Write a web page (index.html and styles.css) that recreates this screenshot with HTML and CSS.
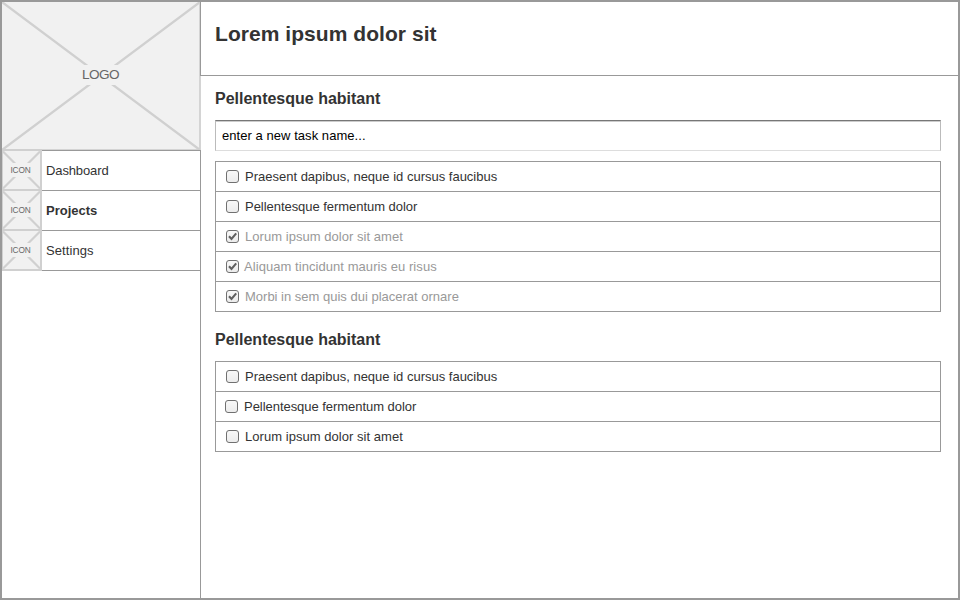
FILE: index.html
```
<!DOCTYPE html>
<html lang="en">
<head>
<meta charset="utf-8">
<title>Projects</title>
<link rel="stylesheet" href="styles.css">
</head>
<body>
<div class="app">
  <aside class="sidebar">
    <div class="logo">
      <svg class="cross" viewBox="0 0 199 149" preserveAspectRatio="none"><path d="M0 0L199 149M199 0L0 149"/></svg>
      <span class="logo-text">LOGO</span>
    </div>
    <nav class="nav">
      <a class="nav-item"><span class="icon"><svg class="cross" viewBox="0 0 39 39"><path d="M0 0L39 39M39 0L0 39"/></svg><span class="icon-text">ICON</span></span><span class="nav-label dashboard">Dashboard</span></a>
      <a class="nav-item active"><span class="icon"><svg class="cross" viewBox="0 0 39 39"><path d="M0 0L39 39M39 0L0 39"/></svg><span class="icon-text">ICON</span></span><span class="nav-label">Projects</span></a>
      <a class="nav-item"><span class="icon"><svg class="cross" viewBox="0 0 39 39"><path d="M0 0L39 39M39 0L0 39"/></svg><span class="icon-text">ICON</span></span><span class="nav-label settings">Settings</span></a>
    </nav>
  </aside>
  <main class="main">
    <header class="header"><h1>Lorem ipsum dolor sit</h1></header>
    <section class="content">
      <h2>Pellentesque habitant</h2>
      <div class="task-input">enter a new task name...</div>
      <ul class="tasks">
        <li><span class="box"></span><span>Praesent dapibus, neque id cursus faucibus</span></li>
        <li><span class="box"></span><span class="snug">Pellentesque fermentum dolor</span></li>
        <li class="done"><span class="box"><svg viewBox="0 0 13 13"><path d="M3 6.2L5.5 8.9L10.2 3.4"/></svg></span><span class="loose">Lorum ipsum dolor sit amet</span></li>
        <li class="done tight"><span class="box"><svg viewBox="0 0 13 13"><path d="M3 6.2L5.5 8.9L10.2 3.4"/></svg></span><span class="looser">Aliquam tincidunt mauris eu risus</span></li>
        <li class="done"><span class="box"><svg viewBox="0 0 13 13"><path d="M3 6.2L5.5 8.9L10.2 3.4"/></svg></span><span>Morbi in sem quis dui placerat ornare</span></li>
      </ul>
      <h2 class="second">Pellentesque habitant</h2>
      <ul class="tasks">
        <li><span class="box"></span><span>Praesent dapibus, neque id cursus faucibus</span></li>
        <li class="shifted"><span class="box"></span><span class="snug">Pellentesque fermentum dolor</span></li>
        <li><span class="box"></span><span class="loose">Lorum ipsum dolor sit amet</span></li>
      </ul>
    </section>
  </main>
</div>
</body>
</html>
```
FILE: styles.css
```
* { box-sizing: border-box; }
body {
  margin: 0;
  font: 13px/16px "Liberation Sans", Arial, sans-serif;
  color: #333;
  background: #fff;
}
.app {
  display: flex;
  width: 960px;
  height: 600px;
  border: 2px solid #999;
}
.sidebar {
  width: 199px;
  flex: none;
  border-right: 1px solid #999;
}
.logo {
  position: relative;
  display: flex;
  align-items: center;
  justify-content: center;
  width: 199px;
  height: 148px;
  background: #f1f1f1;
  border-right: 2px solid #d4d4d4;
  border-bottom: 1px solid #d4d4d4;
}
.cross {
  position: absolute;
  inset: 0;
  width: 100%;
  height: 100%;
  fill: none;
  stroke: #d0d0d0;
  stroke-width: 2.3;
}
.logo .cross { width: 198px; height: 148px; }
.logo-text {
  position: relative;
  bottom: 1px;
  padding: 2px 0;
  width: 42px;
  height: 20px;
  text-align: center;
  background: #f1f1f1;
  color: #666;
  font-size: 13.6px;
  letter-spacing: -.6px;
}
.nav { border-top: 1px solid #999; }
.nav-item {
  display: flex;
  align-items: center;
  height: 40px;
  border-bottom: 1px solid #999;
}
.icon {
  position: relative;
  display: flex;
  align-items: center;
  justify-content: center;
  width: 40px;
  height: 42px;
  margin: -2px 0 -1px;
  padding-right: 2px;
  background: #f1f1f1;
  border: solid #d0d0d0;
  border-width: 2px 2px 2px 1px;
}
.icon-text {
  position: relative;
  width: 26px;
  height: 14px;
  line-height: 14px;
  text-align: center;
  background: #f1f1f1;
  color: #666;
  font-size: 8.3px;
  letter-spacing: -.15px;
}
.nav-label { margin-left: 4px; }
.dashboard { letter-spacing: -.12px; }
.settings { letter-spacing: .08px; }
.active .nav-label { font-weight: bold; }
.main { flex: 1; min-width: 0; }
.header {
  position: relative;
  height: 74px;
  margin-left: -1px;
  padding: 18px 14px 0;
  border: solid #999;
  border-width: 0 0 1px 1px;
}
h1 {
  margin: 0;
  font-size: 21px;
  line-height: 28px;
  letter-spacing: .05px;
}
.content { padding: 13px 17px 0 14px; }
h2 {
  margin: 0 0 11px;
  font-size: 16px;
  line-height: 20px;
}
h2.second { margin-top: 18px; }
.task-input {
  height: 31px;
  padding: 7px 6px 5px;
  border: 1px solid #bbb;
  border-top-color: #777;
  border-bottom-color: #ddd;
  box-shadow: inset 0 1px #ccc;
  color: #000;
  letter-spacing: .05px;
}
.tasks {
  list-style: none;
  margin: 10px 0 0;
  padding: 0;
  border: 1px solid #999;
}
.tasks li {
  display: flex;
  align-items: center;
  height: 30px;
  padding: 1px 0 0 10px;
  border-bottom: 1px solid #999;
}
.tasks li:last-child { height: 29px; border-bottom: 0; }
.tasks li.shifted { padding-left: 9px; }
.box {
  width: 13px;
  height: 13px;
  margin-right: 6px;
  margin-bottom: 1px;
  border: 1px solid #707070;
  border-radius: 3px;
  background: linear-gradient(#f8f8f8, #ececec);
}
.tight .box { margin-right: 5px; }
.snug { letter-spacing: -.04px; }
.loose { letter-spacing: .04px; }
.looser { letter-spacing: .06px; }
.box svg {
  display: block;
  width: 13px;
  height: 13px;
  margin: -1px;
  fill: none;
  stroke: #606060;
  stroke-width: 2.1;
}
.done { color: #999; }
```
